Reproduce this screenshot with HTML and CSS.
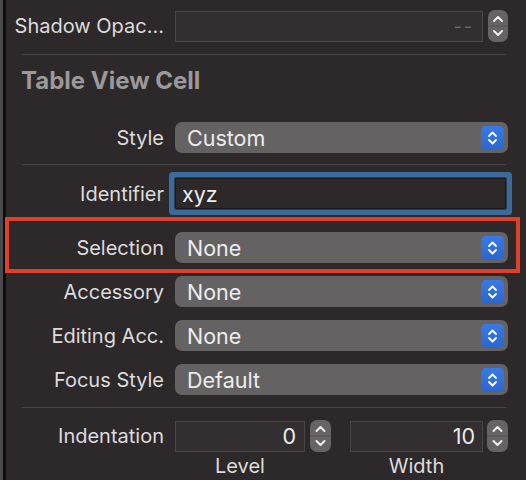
FILE: index.html
```html
<!DOCTYPE html>
<html>
<head>
<meta charset="utf-8">
<link rel="stylesheet" href="styles.css">
</head>
<body>
<div class="panel">
  <div class="content">
    <div class="row r-shadow">
      <div class="label">Shadow Opac...</div>
      <div class="ctl">
        <div class="field f-shadow"><span class="ph">--</span></div>
        <div class="stepper">
          <svg width="20" height="32" viewBox="0 0 20 32"><path d="M6 11 L10 7 L14 11" /><line class="mid" x1="0" y1="16" x2="20" y2="16"/><path d="M6 21 L10 25 L14 21" /></svg>
        </div>
      </div>
    </div>
    <div class="sep s1"></div>
    <div class="header">Table View Cell</div>
    <div class="row r-style">
      <div class="label">Style</div>
      <div class="popup"><span>Custom</span><span class="arrows"><svg width="23" height="24" viewBox="0 0 23 24"><path d="M8 10 L11.5 6.5 L15 10"/><path d="M8 14 L11.5 17.5 L15 14"/></svg></span></div>
    </div>
    <div class="sep s2"></div>
    <div class="row r-ident">
      <div class="label">Identifier</div>
      <div class="field f-ident">xyz</div>
    </div>
    <div class="row r-sel">
      <div class="label">Selection</div>
      <div class="popup"><span>None</span><span class="arrows"><svg width="23" height="24" viewBox="0 0 23 24"><path d="M8 10 L11.5 6.5 L15 10"/><path d="M8 14 L11.5 17.5 L15 14"/></svg></span></div>
    </div>
    <div class="row r-pop">
      <div class="label">Accessory</div>
      <div class="popup"><span>None</span><span class="arrows"><svg width="23" height="24" viewBox="0 0 23 24"><path d="M8 10 L11.5 6.5 L15 10"/><path d="M8 14 L11.5 17.5 L15 14"/></svg></span></div>
    </div>
    <div class="row r-pop">
      <div class="label">Editing Acc.</div>
      <div class="popup"><span>None</span><span class="arrows"><svg width="23" height="24" viewBox="0 0 23 24"><path d="M8 10 L11.5 6.5 L15 10"/><path d="M8 14 L11.5 17.5 L15 14"/></svg></span></div>
    </div>
    <div class="row r-pop">
      <div class="label">Focus Style</div>
      <div class="popup"><span>Default</span><span class="arrows"><svg width="23" height="24" viewBox="0 0 23 24"><path d="M8 10 L11.5 6.5 L15 10"/><path d="M8 14 L11.5 17.5 L15 14"/></svg></span></div>
    </div>
    <div class="sep s3"></div>
    <div class="row r-indent">
      <div class="label">Indentation</div>
      <div class="ctl">
        <div class="field f-level">0</div>
        <div class="stepper st-level">
          <svg width="21" height="32" viewBox="0 0 21 32"><path d="M6.5 11 L10.5 7 L14.5 11" /><line class="mid" x1="0" y1="16" x2="21" y2="16"/><path d="M6.5 21 L10.5 25 L14.5 21" /></svg>
        </div>
        <div class="field f-width">10</div>
        <div class="stepper st-width">
          <svg width="21" height="32" viewBox="0 0 21 32"><path d="M6.5 11 L10.5 7 L14.5 11" /><line class="mid" x1="0" y1="16" x2="21" y2="16"/><path d="M6.5 21 L10.5 25 L14.5 21" /></svg>
        </div>
      </div>
    </div>
    <div class="row r-sub">
      <div class="label"></div>
      <div class="ctl">
        <div class="sub sub-level">Level</div>
        <div class="sub sub-width">Width</div>
      </div>
    </div>
  </div>
  <div class="highlight"></div>
</div>
</body>
</html>
```

FILE: styles.css
```css
html, body {
  margin: 0;
  padding: 0;
  background: #2d292b;
}
body {
  width: 526px;
  height: 480px;
  overflow: hidden;
  font-family: Inter, "Liberation Sans", sans-serif;
}
.panel {
  position: relative;
  height: 480px;
  border-left: 3px solid #4a4a4c;
  box-sizing: border-box;
}
.content {
  height: 480px;
  border-left: 3px solid #0e0d0e;
  box-sizing: border-box;
  padding-top: 10px;
}
.row {
  display: grid;
  grid-template-columns: 158px 333px;
  column-gap: 11px;
  align-items: center;
}
.label {
  text-align: right;
  color: #dedbdc;
  font-size: 20px;
  white-space: nowrap;
}
.ctl {
  display: flex;
  align-items: center;
}
.field {
  box-sizing: border-box;
  height: 31px;
  background: #332e30;
  border: 1px solid #4b4648;
  color: #ececec;
  font-size: 21.5px;
  display: flex;
  align-items: center;
}
.f-shadow {
  width: 308px;
  justify-content: flex-end;
  padding-right: 8px;
}
.ph {
  color: #6e6a6c;
  font-size: 18px;
  letter-spacing: 2px;
}
.stepper {
  width: 20px;
  height: 32px;
  margin-left: 5px;
  background: #686466;
  border-radius: 7px;
  overflow: hidden;
}
.stepper svg {
  display: block;
}
.stepper path {
  fill: none;
  stroke: #eeeeee;
  stroke-width: 2;
  stroke-linecap: round;
  stroke-linejoin: round;
}
.stepper .mid {
  stroke: #545052;
  stroke-width: 1;
}
.sep {
  height: 1px;
  background: #4a4547;
  margin-left: 16px;
  width: 484px;
}
.s1 { margin-top: 12px; }
.header {
  margin-top: 11px;
  margin-left: 15px;
  height: 30px;
  line-height: 30px;
  font-size: 24px;
  font-weight: 700;
  color: #9c999a;
}
.r-style { margin-top: 26px; }
.s2 { margin-top: 11px; }
.popup {
  box-sizing: border-box;
  height: 31px;
  width: 333px;
  background: #656263;
  border-radius: 7px;
  display: flex;
  align-items: center;
  justify-content: space-between;
  padding-left: 12px;
  padding-right: 4px;
  color: #ededed;
  font-size: 21.5px;
}
.arrows {
  width: 23px;
  height: 24px;
  background: linear-gradient(#3a7ae4, #2a66d0);
  border-radius: 5px;
}
.arrows svg { display: block; }
.arrows path {
  fill: none;
  stroke: #ffffff;
  stroke-width: 1.8;
  stroke-linecap: round;
  stroke-linejoin: round;
}
.r-ident { margin-top: 13px; }
.f-ident {
  width: 331px;
  background: #2d292b;
  border: 1px solid #1d1a1c;
  padding-left: 6px;
  box-shadow: 0 0 0 1px #2a3c50, 0 0 0 6px #3b6b9a;
  border-radius: 1px;
}
.r-sel { margin-top: 23px; }
.r-pop { margin-top: 13px; }
.s3 { margin-top: 12px; }
.r-indent { margin-top: 12px; }
.f-level {
  width: 130px;
  justify-content: flex-end;
  padding-right: 8px;
}
.r-indent .stepper { width: 21px; }
.st-level {
  margin-left: 5px;
  margin-right: 19px;
}
.st-width { margin-left: 4px; }
.f-width {
  width: 133px;
  justify-content: flex-end;
  padding-right: 7px;
}
.r-sub { margin-top: 4px; }
.sub {
  color: #dedbdc;
  font-size: 20px;
  line-height: 20px;
  text-align: center;
}
.sub-level { width: 130px; margin-right: 45px; }
.sub-width { width: 133px; }
.highlight {
  position: absolute;
  left: 2px;
  top: 217px;
  width: 515px;
  height: 56px;
  box-sizing: border-box;
  border: 4px solid #dd402b;
}
```
